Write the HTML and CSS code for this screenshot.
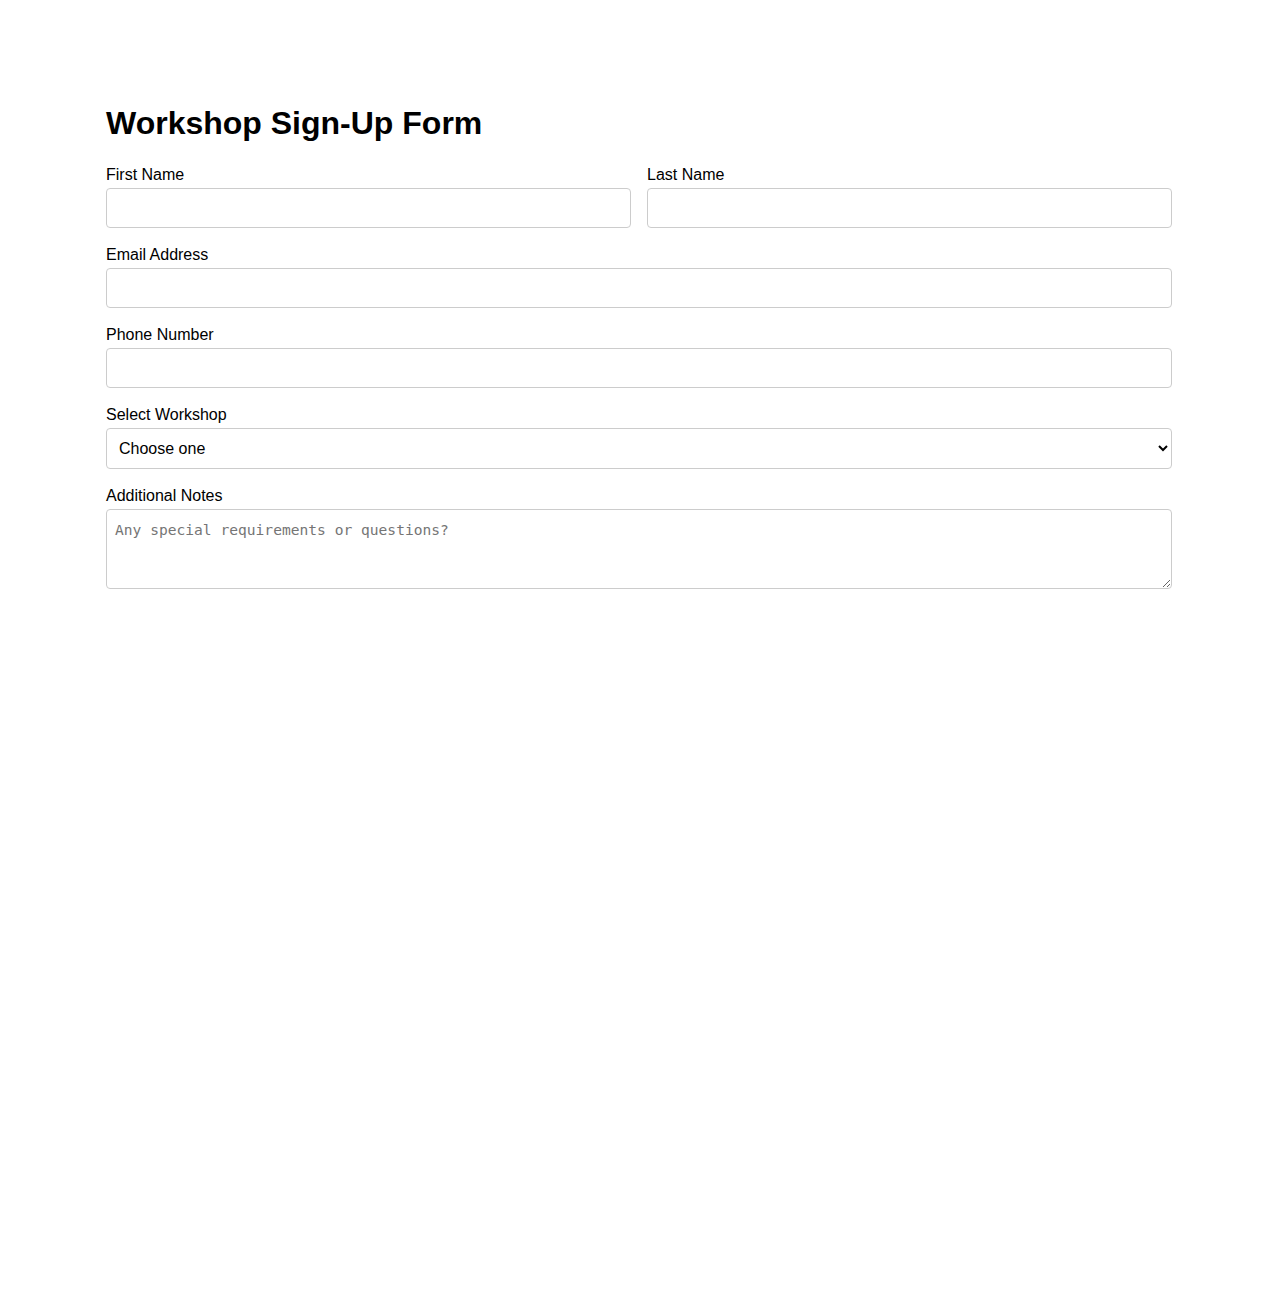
FILE: index.html
```html
<!DOCTYPE html>
<html lang="en">
<head>
    <meta charset="UTF-8">
    <meta name="viewport" content="width=device-width, initial-scale=1.0">
    <title>Workshop Sign-Up Form</title>
    <link rel="stylesheet" href="styles.css">
</head>
<body>
    <div class="container">
        <h1>Workshop Sign-Up Form</h1>
        <form class="signup-form">
            <div class="form-row">
                <div class="form-group">
                    <label for="firstName">First Name</label>
                    <input type="text" id="firstName" name="firstName">
                </div>
                <div class="form-group">
                    <label for="lastName">Last Name</label>
                    <input type="text" id="lastName" name="lastName">
                </div>
            </div>
            <div class="form-group">
                <label for="email">Email Address</label>
                <input type="email" id="email" name="email">
            </div>
            <div class="form-group">
                <label for="phone">Phone Number</label>
                <input type="tel" id="phone" name="phone">
            </div>
            <div class="form-group">
                <label for="workshop">Select Workshop</label>
                <select id="workshop" name="workshop">
                    <option value="">Choose one</option>
                    <option value="design">Design Basics</option>
                    <option value="coding">Intro to Coding</option>
                    <option value="photo">Photography</option>
                </select>
            </div>
            <div class="form-group">
                <label for="notes">Additional Notes</label>
                <textarea id="notes" name="notes" placeholder="Any special requirements or questions?"></textarea>
            </div>
        </form>
    </div>
</body>
</html>
```

FILE: styles.css
```css
body {
    font-family: "Liberation Sans", Arial, sans-serif;
    margin: 0;
    padding: 80px 20px;
    background-color: white;
    color: black;
}
.container {
    max-width: 1066px;
    margin: 0 auto;
}
h1 {
    font-size: 32px;
    margin: 25px 0 22px;
}
.form-row {
    display: flex;
    gap: 16px;
}
.form-row .form-group {
    flex: 1;
}
.form-group {
    margin-bottom: 16px;
}
label {
    display: block;
    font-size: 16px;
    line-height: 22px;
    margin-bottom: 2px;
}
input, select, textarea {
    display: block;
    width: 100%;
    box-sizing: border-box;
    border: 1px solid #ccc;
    border-radius: 4px;
    padding: 8px;
    background-color: white;
}
input {
    height: 40px;
    font-size: 16px;
}
select {
    height: 41px;
    font-size: 16px;
    font-family: "Liberation Sans", Arial, sans-serif;
    color: black;
}
textarea {
    height: 80px;
    padding-top: 11px;
    font-family: "DejaVu Sans Mono", monospace;
    font-size: 14.6px;
}
```
